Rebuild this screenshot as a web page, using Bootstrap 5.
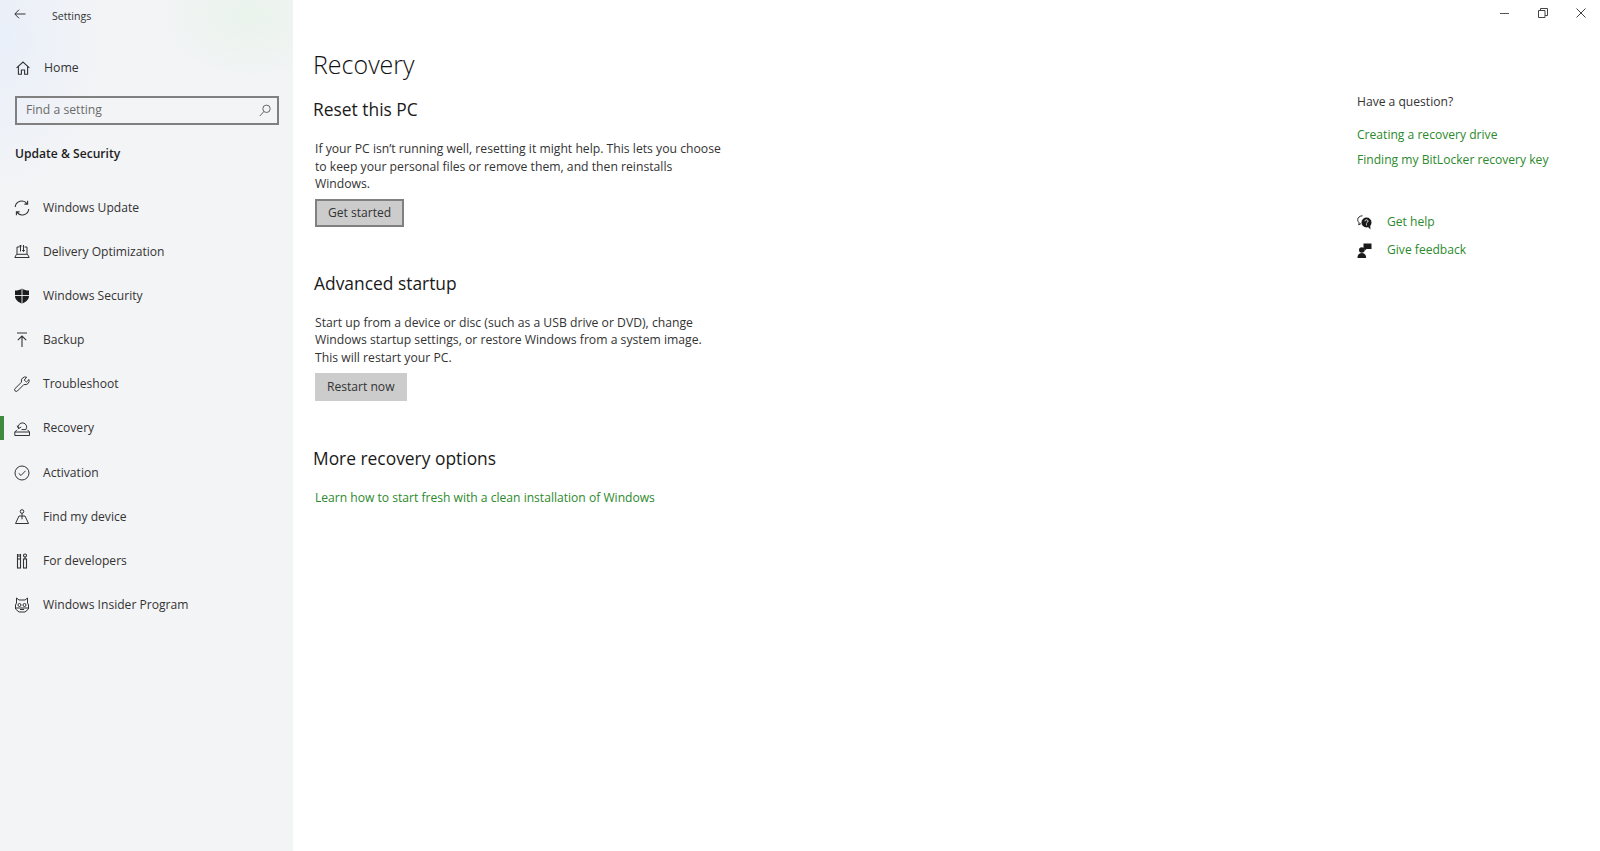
<!DOCTYPE html>
<html lang="en">
<head>
<meta charset="utf-8">
<title>Settings</title>
<link href="https://cdn.jsdelivr.net/npm/bootstrap@5.3.0/dist/css/bootstrap.min.css" rel="stylesheet">
<style>
html,body{height:100%;}
body{font-family:"Open Sans","Noto Sans",sans-serif;font-size:12.1px;color:#222;background:#fff;overflow:hidden;}
.app-shell{height:851px;}
.side-pane{width:293px;flex:none;height:100%;background:
 radial-gradient(ellipse 100px 70px at 250px 15px,#eaf3ec 0%,rgba(234,243,236,0) 100%),
 radial-gradient(ellipse 110px 160px at 0 40px,#e9eff9 0%,rgba(233,239,249,0) 100%),
 #f3f4f6;}
.title-row{height:32px;padding-left:14px;}
.back-icon{margin-bottom:5px;}
.title-text{font-size:10.6px;margin-left:26px;line-height:1;margin-top:1px;color:#333;}
.home-row{margin-top:24px;height:24px;padding-left:16px;font-size:12.3px;gap:14px;color:#333;}
.search-box{margin:16px 0 0 15px;width:264px;height:29px;border:2px solid #808080;padding:0 6px 0 9px;color:#6b6b6b;font-size:12.2px;}
.group-title{font-weight:600;font-size:12.1px;margin:17px 0 0 15px;line-height:24px;height:24px;color:#1d1d1d;}
.side-list{margin-top:20px;}
.side-link{height:44.1px;padding-left:14px;gap:13px;color:#333;font-size:12.1px;position:relative;text-decoration:none;}
.side-link svg{flex:none;}
.side-link.is-active::before{content:"";position:absolute;left:0;top:10px;width:4px;height:24px;background:#3f8a3f;}
.content-pane{padding:47px 0 0 19px;width:1040px;}
.page-title{font-size:25px;font-weight:300;color:#111;line-height:34px;margin:0 0 0 1px;}
.sec-title{font-size:17.4px;font-weight:400;color:#1a1a1a;line-height:26px;margin:0 0 0 1px;}
.title-gap{margin-top:15px;}
.sec-text{width:410px;margin:18px 0 0 3px;font-size:12.2px;line-height:17.6px;color:#333;}
.act-btn{margin:6px 0 0 3px;display:block;background:#ccc;border:2px solid #808080;border-radius:0;color:#333;font-size:12.1px;height:28px;padding:0 11px;line-height:24px;}
.act-btn.plain{border-color:#ccc;padding:0 10px;}
.act-btn:hover{background:#ccc;color:#333;}
.sec-gap-a{margin-top:43px;margin-left:2px;}
.sec-gap-b{margin-top:44px;}
.green-link{color:#2c8a2c;text-decoration:none;font-size:12.1px;}
.link-gap{margin:18px 0 0 3px;}
.help-pane{width:218px;margin-left:auto;margin-right:25px;padding-top:93px;}
.help-head{line-height:18px;color:#333;}
.help-links{margin-top:15px;gap:7.3px;}
.help-actions{margin-top:43px;gap:9px;}
.help-row{gap:15px;height:19px;}
.win-btns{position:absolute;top:7px;right:14px;gap:28.500px;}
</style>
</head>
<body>
<div class="app-shell d-flex position-relative">
  <aside class="side-pane d-flex flex-column">
    <div class="title-row d-flex align-items-center">
      <svg class="back-icon" width="12" height="10" viewBox="0 0 12 10" fill="none" stroke="#333" stroke-width="1"><path d="M11.500 5H1M5 .7 .8 5 5 9.300"/></svg>
      <span class="title-text">Settings</span>
    </div>
    <div class="home-row d-flex align-items-center">
      <svg width="14" height="14" viewBox="0 0 14 14" fill="none" stroke="#333" stroke-width="1.100"><path d="M.6 6.800 7 1l6.400 5.800M2.400 5.600v7.600h3V9h3.200v4.200h3V5.600"/></svg>
      <span>Home</span>
    </div>
    <div class="search-box d-flex align-items-center justify-content-between">
      <span>Find a setting</span>
      <svg width="12" height="13" viewBox="0 0 12 13" fill="none" stroke="#666" stroke-width="1"><circle cx="7.500" cy="4.800" r="3.700"/><path d="M4.800 7.600 .8 12"/></svg>
    </div>
    <div class="group-title">Update &amp; Security</div>
    <nav class="side-list d-flex flex-column">
      <a class="side-link d-flex align-items-center" href="#">
        <svg width="16" height="16" viewBox="0 0 16 16" fill="none" stroke="#333" stroke-width="1.100"><path d="M1.200 7A6.600 6.600 0 0 1 13 3.600M14.800 9A6.600 6.600 0 0 1 3 12.400M13.600 .8v3.300h-3.200M2.400 15.200v-3.300h3.200"/></svg>
        <span>Windows Update</span></a>
      <a class="side-link d-flex align-items-center" href="#">
        <svg width="16" height="16" viewBox="0 0 16 16" fill="none" stroke="#333" stroke-width="1"><path d="M3 10V3h2.500M10.500 3H13v7M.8 13.500h14.400l-1.700-3.200h-11zM6.500 1v6.500M5.200 2.500 6.500 1l1.300 1.500M9.500 7.500V1M8.200 6l1.300 1.500L10.800 6"/></svg>
        <span>Delivery Optimization</span></a>
      <a class="side-link d-flex align-items-center" href="#">
        <svg width="16" height="16" viewBox="0 0 16 16"><path fill="#1c1c1c" d="M8 .4c2 1.400 4.300 2 7 2.100v5.500c0 3.500-3 6.300-7 7.600-4-1.300-7-4.100-7-7.600V2.500C3.700 2.400 6 1.800 8 .4z"/><path stroke="#f3f4f6" stroke-width=".9" d="M8 .4v15.200M1 7.500h14"/></svg>
        <span>Windows Security</span></a>
      <a class="side-link d-flex align-items-center" href="#">
        <svg width="16" height="16" viewBox="0 0 16 16" fill="none" stroke="#333" stroke-width="1.100"><path d="M3 1h10M8 15V4M3.800 8.200 8 4l4.200 4.200"/></svg>
        <span>Backup</span></a>
      <a class="side-link d-flex align-items-center" href="#">
        <svg width="16" height="16" viewBox="0 0 16 16" fill="none" stroke="#333" stroke-width="1"><path d="M15 3.500 12.400 6 10.200 4.100 12.700 1.200A4 4 0 0 0 7.500 6.200L1 12.600a1.700 1.700 0 0 0 2.400 2.400L9.900 8.500A4 4 0 0 0 15 3.500z"/></svg>
        <span>Troubleshoot</span></a>
      <a class="side-link is-active d-flex align-items-center" href="#">
        <svg width="16" height="16" viewBox="0 0 16 16" fill="none" stroke="#333" stroke-width="1"><path d="M4.500 7.500A4.200 4.200 0 1 1 11.800 8.600H7.500M3.200 4.600l1.300 3 2.700-1.500M.8 14.500h14.700V11H.8zM.8 11 3 8.800M15.500 11l-2-2.200"/></svg>
        <span>Recovery</span></a>
      <a class="side-link d-flex align-items-center" href="#">
        <svg width="16" height="16" viewBox="0 0 16 16" fill="none" stroke="#333" stroke-width="1"><circle cx="8" cy="8" r="7"/><path d="M4.700 8.300 7 10.500l4.500-4.700"/></svg>
        <span>Activation</span></a>
      <a class="side-link d-flex align-items-center" href="#">
        <svg width="16" height="16" viewBox="0 0 16 16" fill="none" stroke="#333" stroke-width="1"><circle cx="8" cy="2.500" r="1.800"/><path d="M8 4.300v6M5 7h6l3.500 7.500H1.500z"/></svg>
        <span>Find my device</span></a>
      <a class="side-link d-flex align-items-center" href="#">
        <svg width="16" height="16" viewBox="0 0 16 16" fill="none" stroke="#333" stroke-width="1.100"><rect x="3.500" y="6" width="3" height="9"/><path d="M3.500 1v5M6.500 1v5M5 1v3"/><rect x="9.500" y="6" width="3" height="9"/><circle cx="11" cy="2.500" r="1.500"/><path d="M11 4v2"/></svg>
        <span>For developers</span></a>
      <a class="side-link d-flex align-items-center" href="#">
        <svg width="16" height="16" viewBox="0 0 16 16" fill="none" stroke="#333" stroke-width="1"><path d="M2.500 1 5 3h6l2.500-2M2.500 1v5L1.500 8v4L5 15h6l3.500-3V8l-1-2V1"/><circle cx="5.500" cy="8" r="1.500"/><circle cx="10.500" cy="8" r="1.500"/><path d="M1.500 11h13M6 12.500h4"/></svg>
        <span>Windows Insider Program</span></a>
    </nav>
  </aside>
  <main class="content-pane">
    <h1 class="page-title">Recovery</h1>
    <h2 class="sec-title title-gap">Reset this PC</h2>
    <p class="sec-text mb-0">If your PC isn’t running well, resetting it might help. This lets you choose to keep your personal files or remove them, and then reinstalls Windows.</p>
    <button type="button" class="btn act-btn">Get started</button>
    <h2 class="sec-title sec-gap-a">Advanced startup</h2>
    <p class="sec-text mb-0">Start up from a device or disc (such as a USB drive or DVD), change Windows startup settings, or restore Windows from a system image. This will restart your PC.</p>
    <button type="button" class="btn act-btn plain">Restart now</button>
    <h2 class="sec-title sec-gap-b">More recovery options</h2>
    <a class="green-link d-block link-gap" href="#">Learn how to start fresh with a clean installation of Windows</a>
  </main>
  <aside class="help-pane">
    <div class="help-head">Have a question?</div>
    <div class="help-links d-flex flex-column">
      <a class="green-link" href="#">Creating a recovery drive</a>
      <a class="green-link" href="#">Finding my BitLocker recovery key</a>
    </div>
    <div class="help-actions d-flex flex-column">
      <div class="help-row d-flex align-items-center">
        <svg width="15" height="15" viewBox="0 0 15 15"><path fill="none" stroke="#222" d="M5.500.8C2.800.8.700 2.500.700 4.800c0 1.200.6 2.200 1.500 3l-.5 2 2.300-1.200"/><circle cx="9.500" cy="7.500" r="5" fill="#1a1a1a"/><path fill="#1a1a1a" d="m11 12 2.500 2.500-.3-4z"/><path fill="none" stroke="#fff" d="M8 6.300c0-2 3-2 3 0 0 1-1.500 1-1.500 2.200M9.500 9.300v1"/></svg>
        <a class="green-link" href="#">Get help</a>
      </div>
      <div class="help-row d-flex align-items-center">
        <svg width="15" height="15" viewBox="0 0 15 15" fill="#1a1a1a"><circle cx="4.800" cy="7" r="2.800"/><path d="M.5 15c0-3.500 1.800-5 4.300-5s4.300 1.500 4.300 5z"/><path d="M6.500.5h8v5.500H9.500l-2 2V6h-1z"/></svg>
        <a class="green-link" href="#">Give feedback</a>
      </div>
    </div>
  </aside>
  <div class="win-btns d-flex align-items-center">
    <svg width="10" height="12" viewBox="0 0 10 12" stroke="#555" fill="none"><path d="M1 6.500h9"/></svg>
    <svg width="10" height="12" viewBox="0 0 10 12" stroke="#444" fill="none"><path d="M.5 3.500h6.500v7H.5zM2.500 3.500V1.500h7v7H7"/></svg>
    <svg width="10" height="12" viewBox="0 0 10 12" stroke="#444" fill="none"><path d="M.5 1.500l9 9M9.500 1.500l-9 9"/></svg>
  </div>
</div>
<script src="https://cdn.jsdelivr.net/npm/bootstrap@5.3.0/dist/js/bootstrap.bundle.min.js"></script>
</body>
</html>
